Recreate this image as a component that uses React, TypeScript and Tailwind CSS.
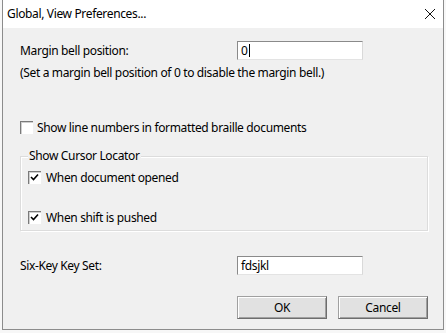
import React from 'react'

const FONT = { fontFamily: '"Noto Sans", "Segoe UI", sans-serif' }

function CheckBox({ checked }: { checked?: boolean }) {
  return (
    <span className="relative inline-block w-[13px] h-[13px] shrink-0 bg-white border-t border-l border-[#7a7a7a] border-b-[#f4f4f4] border-r-[#f4f4f4]">
      <span className="absolute inset-0 border-t border-l border-[#cfcfcf] border-b-0 border-r-0" />
      {checked && (
        <svg className="absolute left-[1px] top-[1px]" width="9" height="9" viewBox="0 0 9 9">
          <path d="M1 4 L3.5 6.5 L8 1.5" fill="none" stroke="#000" strokeWidth="1.6" />
        </svg>
      )}
    </span>
  )
}

function TextBox({ value, caret }: { value: string; caret?: boolean }) {
  return (
    <div className="w-[126px] h-[19px] bg-white border-t border-l border-[#8a8a8a] border-b border-r border-b-[#e3e3e3] border-r-[#d9d9d9] flex items-center pl-[3px] text-[12px] text-black">
      <span>{value}</span>
      {caret && <span className="inline-block w-[1px] h-[13px] bg-black ml-[1px]" />}
    </div>
  )
}

function Button({ label }: { label: string }) {
  return (
    <button className="w-[90px] h-[23px] bg-[#e1e1e1] border border-[#a0a0a0] border-b-[#6d6d6d] border-r-[#6d6d6d] shadow-[inset_1px_1px_0_#ffffff,inset_-1px_-1px_0_#a0a0a0] text-[12px] text-black flex items-center justify-center">
      {label}
    </button>
  )
}

export default function App() {
  return (
    <div className="w-[446px] h-[333px] bg-[#f7f7f7] overflow-hidden tracking-[-0.35px]" style={FONT}>
      <div className="ml-[2px] w-[442px] h-[330px] border-x border-b border-[#8c8c8c] bg-[#f0f0f0] flex flex-col">
        {/* Title bar */}
        <div className="h-[28px] bg-white flex items-center justify-between pl-[4px] pr-[6px]">
          <span className="text-[12px] text-black">Global, View Preferences...</span>
          <svg width="12" height="12" viewBox="0 0 12 12" className="mr-[1px]">
            <path d="M1 1 L11 11 M11 1 L1 11" stroke="#111" strokeWidth="1" />
          </svg>
        </div>

        <div className="pl-[17px] text-[12px] text-black">
          <div className="mt-[13px] flex items-center h-[19px]">
            <span className="w-[217px]">Margin bell position:</span>
            <TextBox value="0" caret />
          </div>
          <div className="mt-[5px] h-[16px] leading-[16px]">
            (Set a margin bell position of 0 to disable the margin bell.)
          </div>

          <div className="mt-[40px] flex items-center h-[13px] gap-[4px]">
            <CheckBox />
            <span>Show line numbers in formatted braille documents</span>
          </div>

          {/* Group box */}
          <div className="relative mt-[22px] w-[408px] h-[75px] border border-[#dcdcdc] shadow-[inset_1px_1px_0_#ffffff,1px_1px_0_#ffffff]">
            <span className="absolute left-[7px] -top-[9px] bg-[#f0f0f0] px-[1px] leading-[16px]">
              Show Cursor Locator
            </span>
            <div className="ml-[7px] mt-[14px] flex items-center h-[13px] gap-[5px]">
              <CheckBox checked />
              <span>When document opened</span>
            </div>
            <div className="ml-[7px] mt-[27px] flex items-center h-[13px] gap-[5px]">
              <CheckBox checked />
              <span>When shift is pushed</span>
            </div>
          </div>

          <div className="mt-[25px] flex items-center h-[19px]">
            <span className="w-[217px]">Six-Key Key Set:</span>
            <TextBox value="fdsjkl" />
          </div>

          <div className="mt-[21px] ml-[217px] flex gap-[11px]">
            <Button label="OK" />
            <Button label="Cancel" />
          </div>
        </div>
      </div>
    </div>
  )
}
